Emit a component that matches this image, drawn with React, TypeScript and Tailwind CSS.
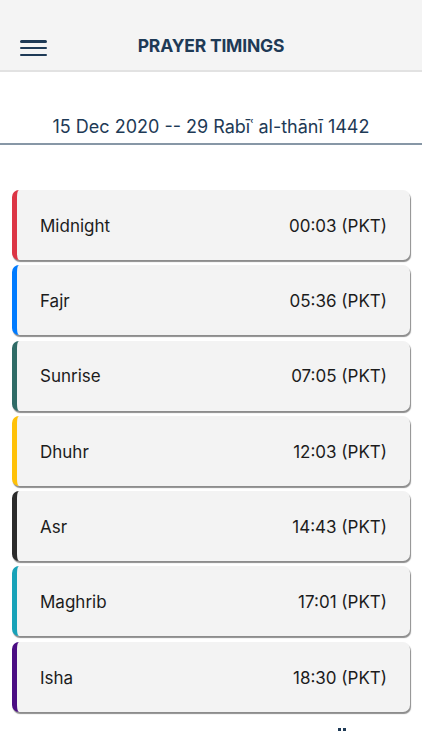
import React from "react";

const rows = [
  { name: "Midnight", time: "00:03 (PKT)", color: "border-l-[#dc3545]" },
  { name: "Fajr", time: "05:36 (PKT)", color: "border-l-[#007bff]" },
  { name: "Sunrise", time: "07:05 (PKT)", color: "border-l-[#2f6b66]" },
  { name: "Dhuhr", time: "12:03 (PKT)", color: "border-l-[#ffc107]" },
  { name: "Asr", time: "14:43 (PKT)", color: "border-l-[#2b2b2b]" },
  { name: "Maghrib", time: "17:01 (PKT)", color: "border-l-[#17a2b8]" },
  { name: "Isha", time: "18:30 (PKT)", color: "border-l-[#4b0d83]" },
];

export default function App() {
  return (
    <div
      className="w-[422px] h-[750px] overflow-hidden bg-white"
      style={{ fontFamily: "Inter, 'Liberation Sans', sans-serif" }}
    >
      <header className="h-[72px] bg-[#f4f4f4] border-b-2 border-[#e2e2e2] flex items-end pb-[13px] relative">
        <div className="pl-[20px] flex flex-col gap-[4.2px] pb-[1px]">
          <div className="w-[27px] h-[2.5px] bg-[#1e3a56] rounded" />
          <div className="w-[27px] h-[2.5px] bg-[#1e3a56] rounded" />
          <div className="w-[27px] h-[2.5px] bg-[#1e3a56] rounded" />
        </div>
        <div className="absolute left-0 right-0 bottom-[11px] text-center text-[17.5px] font-bold text-[#1e3a56] tracking-[-0.2px]">
          PRAYER TIMINGS
        </div>
      </header>
      <div className="h-[73px] flex items-center justify-center pt-[38px] border-b-2 border-[#8797a6]">
        <span className="text-[18px] text-[#1e3a56]">
          15 Dec 2020 -- 29 Rabīʿ al-thānī 1442
        </span>
      </div>
      <div className="flex flex-col gap-[5.3px] pl-[12px] pr-[12px] pt-[45px]">
        {rows.map((r) => (
          <div
            key={r.name}
            className={`h-[70px] bg-[#f3f3f3] rounded-[7px] border-l-[5px] ${r.color} shadow-[1px_2px_1px_rgba(0,0,0,0.45)] flex items-center justify-between pl-[23px] pr-[23px] pt-[3px] text-[17px] text-[#1c1c1c]`}
          >
            <span>{r.name}</span>
            <span>{r.time}</span>
          </div>
        ))}
      </div>
      <div className="flex gap-[2px] pl-[338px] pt-[16px]">
        <div className="w-[3px] h-[3px] bg-[#1e3a56]" />
        <div className="w-[3px] h-[3px] bg-[#1e3a56]" />
      </div>
    </div>
  );
}
